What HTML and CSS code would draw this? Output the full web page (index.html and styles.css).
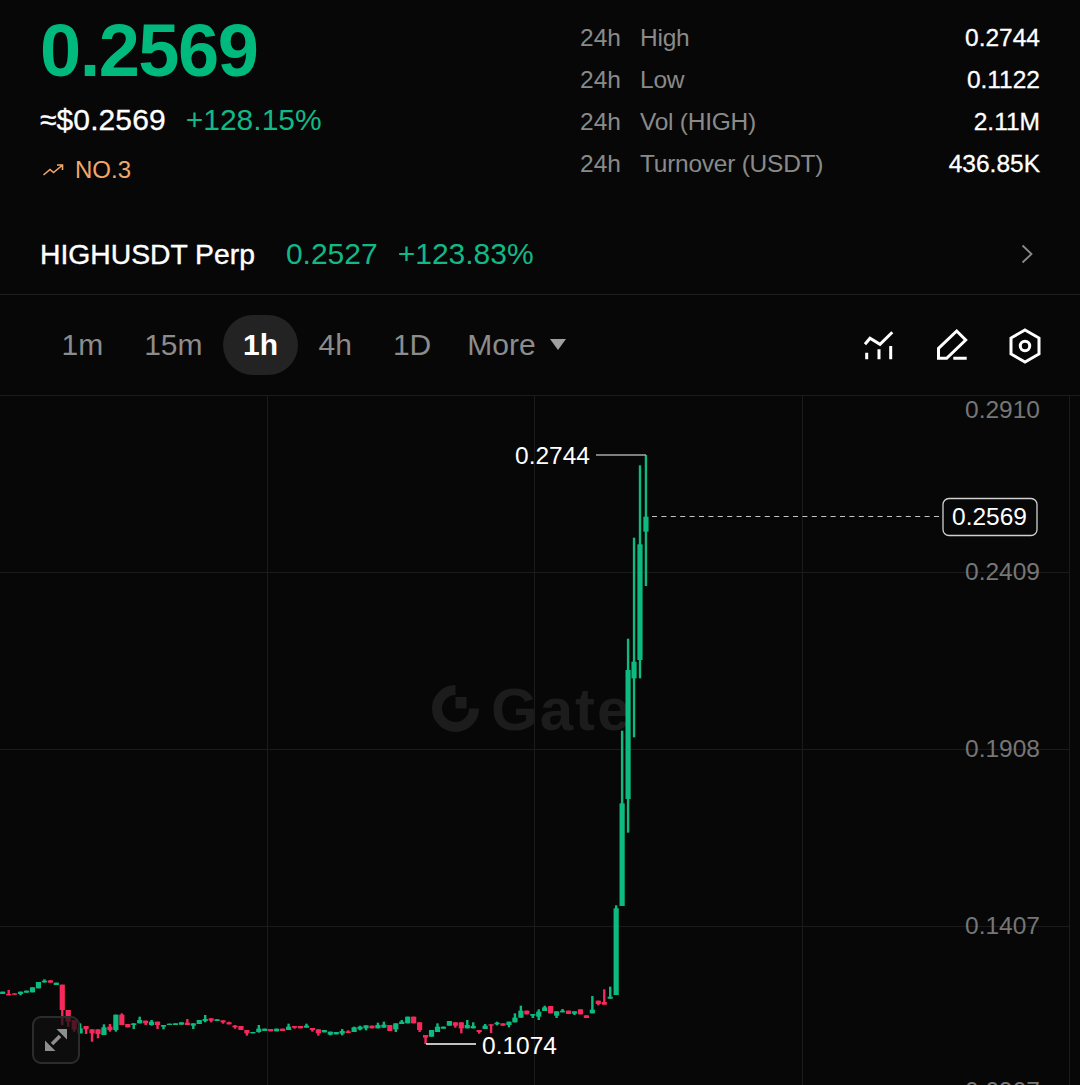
FILE: index.html
```html
<!DOCTYPE html>
<html>
<head>
    <title>HIGH/USDT</title>
    <meta name="viewport" content="width=device-width, initial-scale=1">
    <link rel="stylesheet" href="styles.css">
</head>
<body>

  <div class="summary">
    <div class="quote">
      <div class="price">0.2569</div>
      <div class="sub">
        <span class="usd">≈$0.2569</span>
        <span class="green">+128.15%</span>
      </div>
      <div class="rank">
        <svg class="rank-icon" viewBox="0 0 22 14">
          <path d="M1.5 12 L8 6.5 L11.5 9.5 L20 2.5 M15 2 H20.5 V7"/>
        </svg>
        <span>NO.3</span>
      </div>
    </div>

    <div class="stats">
      <div class="stat"><span class="period">24h</span><span class="label">High</span><span class="value">0.2744</span></div>
      <div class="stat"><span class="period">24h</span><span class="label">Low</span><span class="value">0.1122</span></div>
      <div class="stat"><span class="period">24h</span><span class="label">Vol (HIGH)</span><span class="value">2.11M</span></div>
      <div class="stat"><span class="period">24h</span><span class="label">Turnover (USDT)</span><span class="value">436.85K</span></div>
    </div>
  </div>

  <div class="perp">
    <span class="perp-name">HIGHUSDT Perp</span>
    <span class="green">0.2527</span>
    <span class="green">+123.83%</span>
    <svg class="chevron" viewBox="0 0 12 20"><path d="M1.5 1.5 L10.5 10 L1.5 18.5"/></svg>
  </div>

  <div class="toolbar">
    <a class="tab">1m</a>
    <a class="tab">15m</a>
    <a class="tab active">1h</a>
    <a class="tab">4h</a>
    <a class="tab">1D</a>
    <a class="tab more">More<i class="caret"></i></a>
    <div class="tools">
      <svg class="tool" viewBox="0 0 36 36">
        <path d="M4 16.3 L9 10.3 L19 16.3 L31.3 4.3 M5.7 24.7 V31.3 M18 21.3 V31.3 M29.7 18 V31.3"/>
      </svg>
      <svg class="tool" viewBox="0 0 36 36">
        <path d="M4.5 30.3 V20.3 L22.7 3 L31.7 12 L12.7 30.3 Z M19.3 30.3 H32.7"/>
      </svg>
      <svg class="tool" viewBox="0 0 36 36">
        <path d="M18 2 L32 10 V26 L18 34 L4 26 V10 Z"/>
        <circle cx="18" cy="18" r="4.7"/>
      </svg>
    </div>
  </div>

  <div class="chart">
    <svg class="plot" viewBox="0 395 1080 690">
      <g class="grid">
        <path d="M0 395.5 H1080 M0 572.5 H1069 M0 749.5 H1069 M0 926.5 H1069"/>
        <path d="M267.5 395 V1085 M534.5 395 V1085 M802.5 395 V1085 M1069.5 395 V1085"/>
      </g>

      <g class="mark">
        <path d="M455.5 690 A18.5 18.5 0 1 0 474 708.5" fill="none" stroke-width="10"/>
        <rect x="455.5" y="697" width="11" height="11.5"/>
        <text x="491" y="730">Gate</text>
      </g>

      <g id="candles"></g>

      <g class="axis">
        <text x="1040" y="418">0.2910</text>
        <text x="1040" y="580">0.2409</text>
        <text x="1040" y="757">0.1908</text>
        <text x="1040" y="934">0.1407</text>
        <text x="1040" y="1099">0.0907</text>
      </g>

      <path class="leader" d="M596 455 H646"/>
      <text class="note" x="515" y="464">0.2744</text>
      <path class="leader low" d="M426 1044 H476"/>
      <text class="note" x="482" y="1054">0.1074</text>

      <path class="last-line" d="M652 516.5 H942"/>
      <rect class="last-box" x="943" y="498.5" width="94" height="37" rx="6"/>
      <text class="note" x="952" y="525">0.2569</text>
    </svg>

    <button class="expand">
      <svg viewBox="0 0 44 44">
        <path class="head" d="M33 11 V21.5 L22.5 11 Z M11 33 V22.5 L21.5 33 Z"/>
        <path class="shaft" d="M18 26 L26 18"/>
      </svg>
    </button>
  </div>

  <script src="chart.js"></script>
</body>
</html>
```

FILE: styles.css
```css
body {
  margin: 0;
  height: 1085px;
  overflow: hidden;
  font-family: "Liberation Sans", Arial, sans-serif;
  background-color: #070707;
  color: #fff;
}

.green {
  color: #12b886;
}

.summary {
  display: flex;
  justify-content: space-between;
  height: 214px;
  padding: 0 40px;
}

.price {
  margin-top: 13px;
  font-size: 74px;
  line-height: 76px;
  font-weight: bold;
  letter-spacing: -1.5px;
  color: #00b97d;
}

.sub {
  display: flex;
  gap: 20px;
  margin-top: 14px;
  font-size: 30px;
  line-height: 34px;
}

.usd {
  -webkit-text-stroke: 0.3px #fff;
  letter-spacing: 0.1px;
}

.rank {
  display: flex;
  align-items: center;
  gap: 11px;
  margin-top: 16px;
  font-size: 24px;
  line-height: 34px;
  color: #f3a86b;
}

.rank-icon {
  width: 22px;
  height: 14px;
  margin-left: 2px;
  fill: none;
  stroke: #f3a86b;
  stroke-width: 1.6;
}

.stats {
  width: 460px;
  padding-top: 17px;
}

.stat {
  display: flex;
  height: 42px;
  align-items: center;
  font-size: 24.5px;
}

.period {
  width: 60px;
  color: #8a8a8a;
}

.label {
  color: #8a8a8a;
  letter-spacing: -0.25px;
}

.value {
  margin-left: auto;
  -webkit-text-stroke: 0.3px #fff;
}

.perp {
  display: flex;
  align-items: center;
  gap: 20px;
  height: 80px;
  padding: 0 40px;
  font-size: 30px;
  border-bottom: 1px solid #1f1f1f;
}

.perp-name {
  font-size: 28.3px;
  margin-right: 11px;
  -webkit-text-stroke: 0.4px #fff;
}

.chevron {
  width: 12px;
  height: 20px;
  margin-left: auto;
  margin-right: 7px;
  fill: none;
  stroke: #8a8a8a;
  stroke-width: 1.8;
}

.toolbar {
  display: flex;
  align-items: center;
  height: 100px;
  padding: 0 37px 0 41px;
  font-size: 30px;
  color: #8c8c8c;
}

.tab {
  display: flex;
  align-items: center;
  height: 60px;
  padding: 0 20.5px;
  border-radius: 30px;
}

.tab.active {
  padding: 0 20px;
  background-color: #232323;
  color: #fff;
  font-weight: bold;
}

.tab.more {
  padding-left: 15.5px;
}

.caret {
  width: 0;
  height: 0;
  margin-left: 14px;
  margin-bottom: 2px;
  border-left: 8px solid transparent;
  border-right: 8px solid transparent;
  border-top: 11px solid #a0a0a0;
}

.tools {
  display: flex;
  gap: 37px;
  margin-left: auto;
  margin-top: 2px;
}

.tool {
  width: 36px;
  height: 36px;
  fill: none;
  stroke: #fff;
  stroke-width: 3;
}

.chart {
  position: relative;
  height: 690px;
  overflow: hidden;
}

.plot {
  display: block;
  width: 1080px;
  height: 690px;
}

.grid path {
  fill: none;
  stroke: #1b1b1b;
  stroke-width: 1;
}

.mark {
  fill: #1c1c1c;
  stroke: #1c1c1c;
  stroke-width: 0;
}

.mark text {
  font-size: 60px;
  font-weight: bold;
  letter-spacing: 2px;
}

.axis text {
  font-size: 24.5px;
  fill: #767676;
  text-anchor: end;
}

.note {
  font-size: 24.5px;
  fill: #fff;
}

.leader {
  fill: none;
  stroke: #a8a8a8;
  stroke-width: 1.5;
}

.leader.low {
  stroke: #fff;
}

.last-line {
  fill: none;
  stroke: #c4c4c4;
  stroke-width: 1.2;
  stroke-dasharray: 5 4.4;
}

.last-box {
  fill: #070707;
  stroke: #d0d0d0;
  stroke-width: 1.3;
}

.up {
  fill: #0dbb80;
}

.down {
  fill: #f7285c;
}

.expand {
  position: absolute;
  left: 32px;
  bottom: 21px;
  width: 48px;
  height: 48px;
  padding: 0;
  border: 2px solid #2c2c2c;
  border-radius: 9px;
  background-color: rgba(17, 17, 17, 0.72);
}

.expand svg {
  display: block;
  width: 44px;
  height: 44px;
}

.head {
  fill: #8e8e8e;
}

.shaft {
  fill: none;
  stroke: #8e8e8e;
  stroke-width: 3.5;
}
```

FILE: chart.js
```js
// candles read off the 1h chart: colour, body top, body bottom, wick top, wick bottom
// y values are in thirds of a pixel measured from y=970
var data = [
  ['u',65,72],['d',72,76,60],['d',70,74],['u',65,72,65,76],['u',62,68],['u',52,67],['u',36,55],['u',32,37,28,38],
  ['d',31,38],['u',38,45],['d',44,120,44,165],['d',120,155,120,170],['d',150,178,150,185],['u',175,190,160,190],
  ['d',168,178,168,192],['d',178,190,178,215],['d',178,192,178,205],['u',172,195,163,195],['d',170,180,162,185],
  ['u',134,180,134,185],['d',134,165,130,165],['d',162,172],['u',160,165,160,177],['u',150,160,140,160],
  ['d',152,160,152,165],['u',155,165,150,167],['d',155,165,155,177],['u',165,170,165,178],['u',161,165],['u',160,165],
  ['u',157,164],['d',158,165,147,165],['u',160,167,160,177],['u',150,162],['u',147,153,135,157],['d',145,152,145,157],
  ['u',148,153],['d',151,157,151,161],['d',157,163,155,163],['d',167,172,165,176],['d',168,180],['d',180,190,180,197],
  ['u',186,190],['u',176,186,165,188],['u',176,183],['d',177,184],['u',176,184],['d',176,183],['u',170,180,161,180],
  ['d',168,173,168,176],['d',168,175],['u',167,173,161,173],['d',174,180,174,185],['d',178,190,178,197],['u',180,187],
  ['u',185,194,185,196],['u',186,193],['u',183,191,177,196],['d',184,189,181,189],['u',172,186,170,186],
  ['u',170,178,167,181],['u',166,175,166,181],['d',167,175],['u',165,175,158,175],['u',164,173,155,173],['d',165,183],
  ['u',160,178,160,186],['u',155,162,150,162],['u',140,160],['d',140,160],['d',157,180,157,186],['d',195,203,195,222],
  ['u',180,200],['u',170,186,160,186],['u',170,176],['u',153,167],['d',157,167,157,173],['d',157,175,157,190],
  ['u',165,175,150,175],['u',168,175,157,175],['d',180,186,180,191],['u',167,177,162,177],['d',163,167,163,189],
  ['u',158,163,155,166],['d',160,167],['u',155,165,155,172],['u',143,157,130,157],['u',122,143,107,143],['d',122,133],
  ['u',132,137,132,144],['u',125,140,118,150],['u',112,123,107,123],['d',108,130],['u',124,137,124,144],
  ['u',122,127,117,127],['d',122,132],['u',124,131,124,135],['d',118,133],['d',136,144],['u',119,130,78,130],
  ['d',92,102,92,106],['d',96,104,58,104],['u',80,86,50,86],['u',-185,75,-194,75],['u',-500,-192,-718,-192],
  ['u',-900,-513,-994,-412],['u',-925,-875,-1297,-698],['u',-1277,-930,-1514,-875],['u',-1360,-1315,-1545,-1152]
];

var group = document.getElementById('candles');

function addRect(cls, x, y, w, h) {
  var r = document.createElementNS('http://www.w3.org/2000/svg', 'rect');
  r.setAttribute('class', cls);
  r.setAttribute('x', x);
  r.setAttribute('y', y);
  r.setAttribute('width', w);
  r.setAttribute('height', h);
  group.appendChild(r);
}

data.forEach(function (c, i) {
  var cls = c[0] == 'u' ? 'up' : 'down';
  var x = 2.7 + 5.956 * i;
  var top = c[1], bottom = c[2];
  var wickTop = c[3] === undefined ? top : c[3];
  var wickBottom = c[4] === undefined ? bottom : c[4];

  addRect(cls, x - 1.2, 970 + wickTop / 3, 2.4, (wickBottom - wickTop) / 3);
  addRect(cls, x - 2.6, 970 + top / 3, 5.2, (bottom - top) / 3);
});
```
